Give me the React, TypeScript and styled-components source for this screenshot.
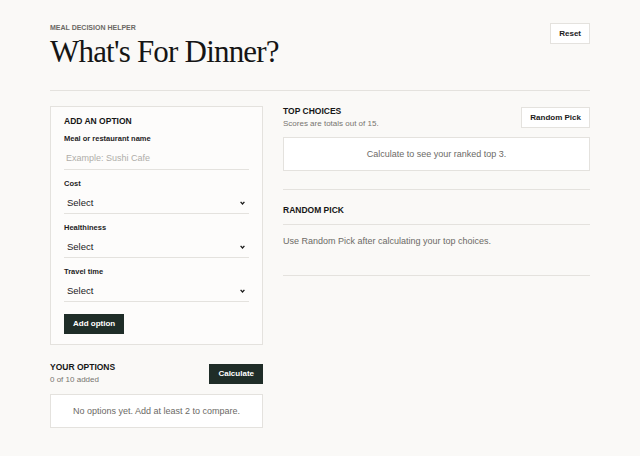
import React, { useState } from 'react';
import styled, { createGlobalStyle } from 'styled-components';

const GlobalStyle = createGlobalStyle`
  html, body {
    margin: 0;
    padding: 0;
    background: #faf9f7;
    font-family: "Liberation Sans", Arial, sans-serif;
    color: #1b1b1b;
  }
  * { box-sizing: border-box; }
`;

const Page = styled.div`
  width: 540px;
  margin: 0 auto;
  padding: 22px 0 20px;
`;

const Header = styled.header`
  display: flex;
  justify-content: space-between;
  align-items: flex-start;
  padding-bottom: 20px;
  border-bottom: 1px solid #e4e2de;
`;

const Eyebrow = styled.div`
  font-size: 7px;
  font-weight: 700;
  color: #6b6965;
  text-transform: uppercase;
  line-height: 11px;
`;

const Title = styled.h1`
  margin: 1px 0 0;
  font-family: "Liberation Serif", "Times New Roman", serif;
  font-weight: 400;
  font-size: 31px;
  letter-spacing: -0.8px;
  line-height: 36px;
  color: #151515;
`;

const GhostButton = styled.button<{ $mt?: number }>`
  background: #fff;
  border: 1px solid #e4e2de;
  color: #1b1b1b;
  font-family: inherit;
  font-size: 8px;
  font-weight: 700;
  padding: 0 8px;
  height: 21px;
  cursor: pointer;
  margin-top: ${p => p.$mt ?? 0}px;
`;

const DarkButton = styled.button<{ $mt?: number }>`
  background: #1f2d28;
  border: none;
  color: #fff;
  font-family: inherit;
  font-size: 8px;
  font-weight: 700;
  padding: 0 9px;
  height: 20px;
  cursor: pointer;
  margin-top: ${p => p.$mt ?? 0}px;
`;

const Columns = styled.main`
  display: grid;
  grid-template-columns: 213px 307px;
  gap: 20px;
  margin-top: 15px;
`;

const Column = styled.section`
  display: flex;
  flex-direction: column;
`;

const Card = styled.div`
  background: #fdfcfb;
  border: 1px solid #e4e2de;
  padding: 9px 13px 10px;
`;

const SectionTitle = styled.h2`
  margin: 0;
  font-size: 8.5px;
  font-weight: 700;
  line-height: 10px;
  text-transform: uppercase;
  color: #161616;
`;

const Field = styled.div<{ $first?: boolean }>`
  display: flex;
  flex-direction: column;
  margin-top: ${p => (p.$first ? 8 : 9)}px;
`;

const Label = styled.label`
  font-size: 7.5px;
  font-weight: 700;
  line-height: 10px;
  color: #1d1d1d;
`;

const TextInput = styled.input`
  margin-top: 2px;
  border: none;
  border-bottom: 1px solid #e4e2de;
  background: transparent;
  font-family: inherit;
  font-size: 9px;
  height: 24px;
  padding: 0 2px;
  color: #1b1b1b;
  outline: none;
  &::placeholder { color: #afada9; }
`;

const SelectWrap = styled.div`
  position: relative;
  margin-top: 2px;
`;

const Select = styled.select`
  appearance: none;
  width: 100%;
  border: none;
  border-bottom: 1px solid #e4e2de;
  border-radius: 0;
  background: transparent;
  font-family: inherit;
  font-size: 9.5px;
  height: 23px;
  padding: 0 0 0 3px;
  color: #1b1b1b;
  outline: none;
`;

const Chevron = styled.svg`
  position: absolute;
  right: 4px;
  top: 10px;
  width: 5px;
  height: 4px;
  pointer-events: none;
`;

const FormActions = styled.div`
  margin-top: 10px;
`;

const SplitHead = styled.div<{ $mt?: number }>`
  display: flex;
  justify-content: space-between;
  align-items: flex-start;
  margin-top: ${p => p.$mt ?? 0}px;
`;

const Sub = styled.div`
  font-size: 8px;
  line-height: 11px;
  margin-top: 2px;
  color: #77746f;
`;

const EmptyBox = styled.div<{ $mt?: number }>`
  background: #fff;
  border: 1px solid #e4e2de;
  height: 34px;
  display: flex;
  align-items: center;
  justify-content: center;
  font-size: 9px;
  color: #6c6a66;
  margin-top: ${p => p.$mt ?? 9}px;
`;

const PickSection = styled.div`
  margin-top: 18px;
  border-top: 1px solid #e4e2de;
  border-bottom: 1px solid #e4e2de;
  padding-bottom: 28px;
`;

const PickHead = styled.div`
  padding: 15px 0 9px;
  border-bottom: 1px solid #e4e2de;
`;

const PickText = styled.p`
  margin: 10px 0 0;
  font-size: 9px;
  line-height: 12px;
  color: #6c6a66;
`;

const scaleOptions = ['Select', '1', '2', '3', '4', '5'];

const fields = ['Cost', 'Healthiness', 'Travel time'];

export default function App() {
  const [name, setName] = useState('');
  const [values, setValues] = useState<Record<string, string>>({});

  return (
    <>
      <GlobalStyle />
      <Page>
        <Header>
          <div>
            <Eyebrow>Meal Decision Helper</Eyebrow>
            <Title>What's For Dinner?</Title>
          </div>
          <GhostButton $mt={1}>Reset</GhostButton>
        </Header>

        <Columns>
          <Column>
            <Card>
              <SectionTitle>Add an option</SectionTitle>
              <Field $first>
                <Label>Meal or restaurant name</Label>
                <TextInput
                  placeholder="Example: Sushi Cafe"
                  value={name}
                  onChange={e => setName(e.target.value)}
                />
              </Field>
              {fields.map(f => (
                <Field key={f}>
                  <Label>{f}</Label>
                  <SelectWrap>
                    <Select
                      value={values[f] ?? 'Select'}
                      onChange={e => setValues({ ...values, [f]: e.target.value })}
                    >
                      {scaleOptions.map(o => (
                        <option key={o} value={o}>{o}</option>
                      ))}
                    </Select>
                    <Chevron viewBox="0 0 5 4">
                      <path d="M0.6 0.8 L2.5 3 L4.4 0.8" fill="none" stroke="#1b1b1b" strokeWidth="1.3" />
                    </Chevron>
                  </SelectWrap>
                </Field>
              ))}
              <FormActions>
                <DarkButton>Add option</DarkButton>
              </FormActions>
            </Card>

            <SplitHead $mt={17}>
              <div>
                <SectionTitle>Your options</SectionTitle>
                <Sub>0 of 10 added</Sub>
              </div>
              <DarkButton $mt={2}>Calculate</DarkButton>
            </SplitHead>
            <EmptyBox>No options yet. Add at least 2 to compare.</EmptyBox>
          </Column>

          <Column>
            <SplitHead>
              <div>
                <SectionTitle>Top choices</SectionTitle>
                <Sub>Scores are totals out of 15.</Sub>
              </div>
              <GhostButton $mt={1}>Random Pick</GhostButton>
            </SplitHead>
            <EmptyBox $mt={8}>Calculate to see your ranked top 3.</EmptyBox>

            <PickSection>
              <PickHead>
                <SectionTitle>Random pick</SectionTitle>
              </PickHead>
              <PickText>Use Random Pick after calculating your top choices.</PickText>
            </PickSection>
          </Column>
        </Columns>
      </Page>
    </>
  );
}
